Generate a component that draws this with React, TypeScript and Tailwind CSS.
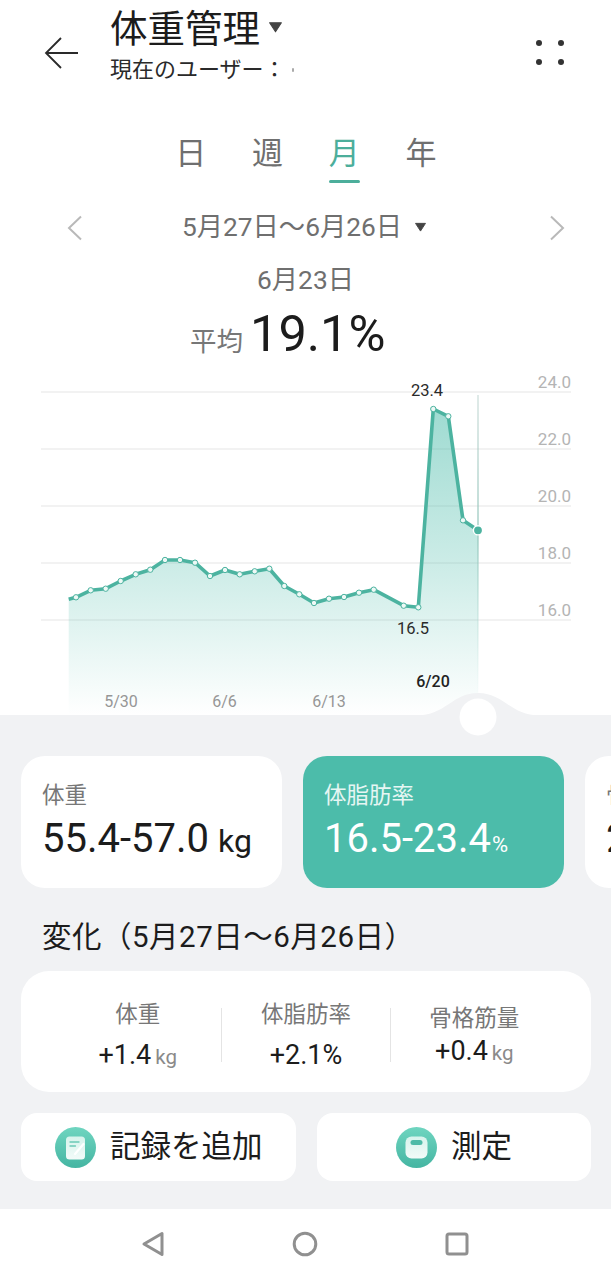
import React from "react";

const FONT = "font-['Roboto','Noto_Sans_CJK_JP',sans-serif]";

const pts: [number, number][] = [
  [68.7, 599.3], [76, 597.3], [90.7, 590.3], [105.7, 588.7], [120.7, 581], [135.7, 574.3], [150.3, 569.7],
  [165, 560], [180, 560], [195, 562.7], [210, 576], [225, 570], [239.7, 574.3], [254.7, 571.3], [269.3, 568.7],
  [284.3, 586], [299.3, 594.3], [314, 603], [329, 598.7], [344, 597], [359, 592.7], [373.7, 589.7],
  [403.7, 605.7], [418.3, 607.3], [433.3, 409], [448.3, 416.3], [463, 520.3], [478, 530.3],
];
const grid = [392, 449, 506, 563, 620];
const axis = ["24.0", "22.0", "20.0", "18.0", "16.0"];
const Y0 = 380;

function Chart() {
  const line = pts.map((p) => p.join(",")).join(" ");
  return (
    <div className="h-[335px] relative z-10">
      <svg width="611" height="360" viewBox={`0 ${Y0} 611 360`} className="block overflow-visible absolute left-0 top-0">
        <defs>
          <linearGradient id="fill" gradientUnits="userSpaceOnUse" x1="0" y1="400" x2="0" y2="715">
            <stop offset="0" stopColor="#4cbcaa" stopOpacity="0.55" />
            <stop offset="0.55" stopColor="#4cbcaa" stopOpacity="0.27" />
            <stop offset="1" stopColor="#4cbcaa" stopOpacity="0" />
          </linearGradient>
          <linearGradient id="vline" gradientUnits="userSpaceOnUse" x1="0" y1="395" x2="0" y2="700">
            <stop offset="0" stopColor="#a8c6c0" stopOpacity="0.6" />
            <stop offset="0.45" stopColor="#8fc4b9" />
            <stop offset="1" stopColor="#bfe3dc" stopOpacity="0" />
          </linearGradient>
        </defs>
        {grid.map((y) => (
          <line key={y} x1="41" x2="571" y1={y} y2={y} stroke="#e6e6e6" strokeWidth="1.2" />
        ))}
        <polygon points={`68.7,715 ${line} 478,715`} fill="url(#fill)" />
        <rect x="477.4" y="395" width="1.2" height="305" fill="url(#vline)" />
        <polyline points={line} fill="none" stroke="#4cb3a0" strokeWidth="3.6" strokeLinejoin="round" />
        {pts.slice(1, -1).map((p, i) => (
          <circle key={i} cx={p[0]} cy={p[1]} r="2.7" fill="#eef9f6" stroke="#4cb3a0" strokeWidth="1" />
        ))}
        <circle cx="478" cy="530.3" r="4.6" fill="#4cb3a0" stroke="#ffffff" strokeWidth="1.4" />
        {axis.map((t, i) => (
          <text key={t} x="571" y={grid[i] - 4.5} textAnchor="end" fontSize="17" fill="#b4b4b4" fontFamily="Roboto">
            {t}
          </text>
        ))}
        <text x="427" y="396" textAnchor="middle" fontSize="16.5" fill="#2a2a2a" fontFamily="Roboto">23.4</text>
        <text x="413" y="634" textAnchor="middle" fontSize="16.5" fill="#2a2a2a" fontFamily="Roboto">16.5</text>
        <text x="121" y="707" textAnchor="middle" fontSize="16" fill="#969696" fontFamily="Roboto">5/30</text>
        <text x="224.5" y="707" textAnchor="middle" fontSize="16" fill="#969696" fontFamily="Roboto">6/6</text>
        <text x="329" y="707" textAnchor="middle" fontSize="16" fill="#969696" fontFamily="Roboto">6/13</text>
        <text x="433" y="687" textAnchor="middle" fontSize="16" fontWeight="500" fill="#222222" fontFamily="Roboto">6/20</text>
        <path d="M416 715.5 C446 715.5 452 693 478 693 C504 693 510 715.5 540 715.5 Z" fill="#f1f2f4" />
        <circle cx="478" cy="717" r="18.5" fill="#ffffff" />
      </svg>
    </div>
  );
}

function Caret({ className }: { className: string }) {
  return (
    <svg viewBox="0 0 14 11" className={className}>
      <path d="M1.5 1.5h11L7 10z" fill="#444444" stroke="#444444" strokeLinejoin="round" />
    </svg>
  );
}

function Chevron({ dir }: { dir: "l" | "r" }) {
  return (
    <svg width="16" height="26" viewBox="0 0 16 26" fill="none" stroke="#b9b9b9" strokeWidth="2">
      <path d={dir === "l" ? "M14 1.5 2 13l12 11.5" : "M2 1.5 14 13 2 24.5"} />
    </svg>
  );
}

function CircleIcon({ id, children }: { id: string; children: React.ReactNode }) {
  return (
    <svg width="41" height="41" viewBox="0 0 41 41" className="shrink-0">
      <defs>
        <linearGradient id={id} x1="0" y1="0" x2="0" y2="1">
          <stop offset="0" stopColor="#6fd5c0" />
          <stop offset="1" stopColor="#45b5a2" />
        </linearGradient>
        <linearGradient id={`${id}w`} x1="0" y1="0" x2="0" y2="1">
          <stop offset="0" stopColor="#d6f3ec" />
          <stop offset="1" stopColor="#f3fbf9" />
        </linearGradient>
      </defs>
      <circle cx="20.5" cy="20.5" r="20.5" fill={`url(#${id})`} />
      {children}
    </svg>
  );
}

function Card({ label, value, unit, active, unitCls }: { label: string; value: string; unit: string; active?: boolean; unitCls: string }) {
  return (
    <div className={`w-[261px] h-[132px] shrink-0 rounded-[24px] pl-[21px] pt-[25px] ${active ? "bg-[#4cbcaa] text-white" : "bg-white text-[#1c1c1c]"}`}>
      <div className={`text-[22.5px] leading-[28px] ${active ? "text-[#e6f6f3]" : "text-[#777777]"}`}>{label}</div>
      <div className="mt-[6px] flex items-baseline leading-[48px] whitespace-nowrap">
        <span className="text-[40px]">{value}</span>
        <span className={unitCls}>{unit}</span>
      </div>
    </div>
  );
}

function Stat({ label, value, unit, shift }: { label: string; value: string; unit: string; shift?: boolean }) {
  return (
    <div className={`flex-1 flex flex-col items-center ${shift ? "pt-[4px]" : ""}`}>
      <div className="text-[22.5px] leading-[28px] text-[#777777]">{label}</div>
      <div className={`flex items-baseline leading-[34px] ${shift ? "mt-[2px]" : "mt-[10px]"}`}>
        <span className="text-[27px] text-[#1c1c1c]">{value}</span>
        {unit && <span className="ml-[4px] text-[20.5px] text-[#8a8a8a]">{unit}</span>}
      </div>
    </div>
  );
}

export default function App() {
  return (
    <div className={`${FONT} w-[611px] h-[1280px] bg-white overflow-hidden flex flex-col`}>
      {/* Header */}
      <header className="h-[100px] shrink-0 flex items-start pl-[44px] pr-[47px] text-[#1c1c1c]">
        <svg width="36" height="34" viewBox="0 0 36 34" fill="none" stroke="#2a2a2a" strokeWidth="1.8" className="mt-[36px] shrink-0">
          <path d="M34 17H2M17 2 2 17l15 15" />
        </svg>
        <div className="ml-[30px] pt-[7px] flex-1">
          <div className="flex items-center h-[44px]">
            <span className="text-[37.5px] leading-[44px]">体重管理</span>
            <Caret className="w-[15px] h-[12px] ml-[8px] mb-[4px]" />
          </div>
          <div className="mt-[5px] h-[28px] flex items-center text-[22px] leading-[28px] text-[#2a2a2a]">
            現在のユーザー：
            <span className="ml-[6px] w-[2px] h-[4px] bg-[#aaaaaa] rounded-full" />
          </div>
        </div>
        <div className="mt-[40px] grid grid-cols-2 gap-x-[16px] gap-y-[13px]">
          <span className="w-[6px] h-[6px] rounded-full bg-[#333333]" />
          <span className="w-[6px] h-[6px] rounded-full bg-[#333333]" />
          <span className="w-[6px] h-[6px] rounded-full bg-[#333333]" />
          <span className="w-[6px] h-[6px] rounded-full bg-[#333333]" />
        </div>
      </header>

      {/* Tabs */}
      <nav className="h-[84px] shrink-0 pt-[31px] pl-[152.5px] flex text-[31px] leading-[46px] text-[#6f6f6f]">
        <div className="w-[76.7px] text-center">日</div>
        <div className="w-[76.7px] text-center">週</div>
        <div className="w-[76.7px] text-center text-[#4cae9b] flex flex-col items-center">
          月
          <span className="block w-[31px] h-[3px] rounded-full bg-[#4cae9b] mt-[3px]" />
        </div>
        <div className="w-[76.7px] text-center">年</div>
      </nav>

      {/* Date range */}
      <div className="h-[40px] mt-[24px] shrink-0 flex items-center justify-between pl-[67px] pr-[46px]">
        <Chevron dir="l" />
        <div className="flex items-center text-[26.3px] text-[#6f6f6f] ml-[-23px]">
          5月27日〜6月26日
          <Caret className="w-[13px] h-[10px] ml-[12px] mb-[3px]" />
        </div>
        <Chevron dir="r" />
      </div>

      <div className="h-[32px] mt-[16px] shrink-0 text-center text-[26.3px] leading-[32px] text-[#6f6f6f]">6月23日</div>

      <div className="h-[60px] mt-[9px] shrink-0 flex items-baseline pl-[190px]">
        <span className="text-[26.5px] text-[#777777]">平均</span>
        <span className="ml-[7px] text-[50.5px] leading-[58px] text-[#1c1c1c]">19.1%</span>
      </div>

      <div className="h-[15px] shrink-0" />
      <Chart />

      {/* Panel */}
      <main className="flex-1 bg-[#f1f2f4] pt-[41px] text-[#1c1c1c]">
        <div className="flex gap-[21px] pl-[21px] overflow-hidden">
          <Card label="体重" value="55.4-57.0" unit="kg" unitCls="ml-[9px] text-[32px]" />
          <Card label="体脂肪率" value="16.5-23.4" unit="%" active unitCls="ml-[1px] text-[22px]" />
          <Card label="骨格筋量" value="21.7-22.1" unit="kg" unitCls="ml-[9px] text-[32px]" />
        </div>

        <h2 className="mt-[31px] pl-[42px] text-[29.5px] leading-[36px] font-normal tracking-[0.5px]">変化（5月27日〜6月26日）</h2>

        <section className="ml-[21px] mr-[20px] mt-[16px] h-[121px] rounded-[28px] bg-white flex items-start px-[33px] pt-[29px]">
          <Stat label="体重" value="+1.4" unit="kg" />
          <span className="w-px h-[54px] bg-[#e4e4e4] mt-[8px]" />
          <Stat label="体脂肪率" value="+2.1%" unit="" />
          <span className="w-px h-[54px] bg-[#e4e4e4] mt-[8px]" />
          <Stat label="骨格筋量" value="+0.4" unit="kg" shift />
        </section>

        <div className="ml-[21px] mr-[20px] mt-[21px] flex gap-[21px]">
          <button className="w-[275px] h-[68px] rounded-[16px] bg-white flex items-center pl-[34px] text-[30.5px] text-[#1c1c1c]">
            <CircleIcon id="a">
              <rect x="11" y="9.5" width="19" height="23" rx="3.5" fill="url(#aw)" />
              <path d="M15 15h9M15 19h5.5" stroke="#6cc9b7" strokeWidth="1.3" strokeLinecap="round" />
              <path d="M20 27l8.5-10" stroke="#ffffff" strokeWidth="2.2" strokeLinecap="round" />
            </CircleIcon>
            <span className="ml-[14px]">記録を追加</span>
          </button>
          <button className="w-[274px] h-[68px] rounded-[16px] bg-white flex items-center pl-[79px] text-[30.5px] text-[#1c1c1c]">
            <CircleIcon id="b">
              <rect x="9.5" y="9.5" width="22" height="22" rx="6" fill="url(#bw)" />
              <rect x="14.5" y="13" width="12" height="5" rx="2.5" fill="#4fbba8" />
            </CircleIcon>
            <span className="ml-[14px]">測定</span>
          </button>
        </div>
      </main>

      {/* System nav */}
      <footer className="h-[71px] shrink-0 bg-white flex items-center justify-center gap-[127px] pb-[1px]">
        <svg width="24" height="26" viewBox="0 0 24 26" fill="none" stroke="#909090" strokeWidth="3" strokeLinejoin="round" className="ml-[-1px]">
          <path d="M21 2.5v21L3 13z" />
        </svg>
        <svg width="26" height="26" viewBox="0 0 26 26" fill="none" stroke="#909090" strokeWidth="3">
          <circle cx="13" cy="13" r="10.8" />
        </svg>
        <svg width="24" height="24" viewBox="0 0 24 24" fill="none" stroke="#909090" strokeWidth="3" strokeLinejoin="round">
          <rect x="2" y="2" width="20" height="20" rx="2" />
        </svg>
      </footer>
    </div>
  );
}
